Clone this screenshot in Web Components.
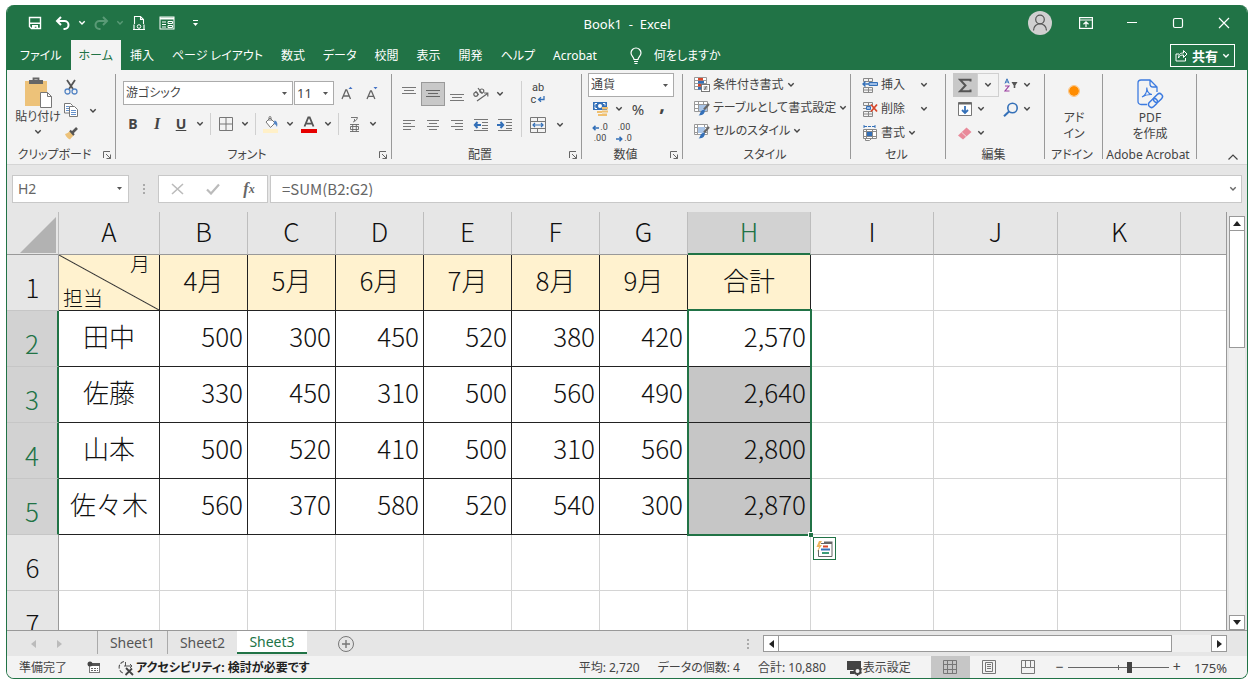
<!DOCTYPE html>
<html lang="ja">
<head>
<meta charset="utf-8">
<title>Book1 - Excel</title>
<style>
  html, body { height: 100%; }
  body {
    margin: 0;
    padding: 5px 6px 6px;
    box-sizing: border-box;
    background: #fff;
    color: #444;
    font-family: "Noto Sans", "Noto Sans CJK JP", sans-serif;
    font-size: 12px;
    line-height: 16px;
    font-feature-settings: "palt";
    --green: #217346;
    --chrome: #e6e6e6;
    --ribbon: #f3f3f3;
  }
</style>
</head>
<body>
<xl-window>
  <xl-titlebar slot="top" book="Book1  -  Excel"></xl-titlebar>
  <xl-tabs slot="top"></xl-tabs>
  <xl-ribbon slot="top"></xl-ribbon>
  <xl-formula slot="top" ref="H2" formula="=SUM(B2:G2)"></xl-formula>
  <xl-sheet></xl-sheet>
  <xl-sheetbar slot="bottom"></xl-sheetbar>
  <xl-status slot="bottom"></xl-status>
</xl-window>

<script>
// Iconos: [ancho, alto, contenido svg]
const ICONS = {
  save: [14, 14, '<path d="M1.5 1.5h11v11h-9l-2-2z" fill="none" stroke="#fff" stroke-width="1.4"/><path d="M2 6.5h10v1.4H2zM4 9h6v4H8.400v-2.200H6.800V13H4z" fill="#fff"/>'],
  undo: [16, 14, '<path d="M6 1 2 5l4 4M2.500 5H9.500a4 4 0 0 1 0 8H8.500" fill="none" stroke="#fff" stroke-width="2"/>'],
  redo: [16, 14, '<path d="M10 1l4 4-4 4M13.500 5H6.500a4 4 0 0 0 0 8H7.500" fill="none" stroke="#5a9a76" stroke-width="2"/>'],
  preview: [14, 16, '<path d="M2.500 9V1.500h6l3 3V9M8.500 1.500v3h3M1 14.500h12" fill="none" stroke="#fff" stroke-width="1.100"/><circle cx="7" cy="11.500" r="1.800" fill="none" stroke="#fff"/><path d="M2 9.500v5M12 9.500v5" stroke="#fff" stroke-width="1.200"/>'],
  form: [16, 14, '<rect x="1" y="1" width="14" height="12" fill="none" stroke="#fff"/><path d="M1 2.500h14" stroke="#fff" stroke-width="2"/><path d="M3 6h4M3 8.500h4M3 11h4" stroke="#fff"/><path d="M9 5.500h4.500v2H9zM9 9.500h4.500v2H9z" fill="none" stroke="#fff"/>'],
  qat: [7, 8, '<path d="M1 1.500h5" stroke="#fff"/><path d="M1 4h5L3.500 7z" fill="#fff"/>'],
  chev: [8, 6, '<path d="M1.300 1.300 4 4 6.700 1.300" fill="none" stroke="currentColor" stroke-width="1.400"/>'],
  up: [12, 8, '<path d="M1.500 6.500 6 2l4.500 4.500" fill="none" stroke="#444" stroke-width="1.200"/>'],
  caret: [5, 3, '<path d="M0 0h5L2.500 3z" fill="#555"/>'],
  user: [24, 24, '<circle cx="12" cy="12" r="12" fill="#d0d0d0"/><circle cx="12" cy="8.500" r="4.300" fill="none" stroke="#555" stroke-width="1.200"/><path d="M5.500 19.500c0-9 13-9 13 0" fill="none" stroke="#555" stroke-width="1.200"/>'],
  display: [14, 12, '<rect x=".6" y=".6" width="12.800" height="10.800" fill="none" stroke="#fff" stroke-width="1.200"/><path d="M1 3h12M7 10V5M4.500 7.200 7 4.800l2.500 2.400" fill="none" stroke="#fff" stroke-width="1.200"/>'],
  min: [12, 12, '<path d="M1 5.500h10" stroke="#fff"/>'],
  max: [12, 12, '<rect x="1.500" y="1.500" width="9" height="9" rx="1.500" fill="none" stroke="#fff" stroke-width="1.200"/>'],
  close: [12, 12, '<path d="M1 1l10 10M11 1 1 11" stroke="#fff" stroke-width="1.200"/>'],
  bulb: [12, 18, '<path d="M4 12.500c0-2.500-3-3.500-3-6.500a5 5 0 0 1 10 0c0 3-3 4-3 6.500zM4 14.500h4M4.500 16.500h3" fill="none" stroke="#fff" stroke-width="1.200"/>'],
  share: [13, 13, '<path d="M4 5H1v7h9.500V9" fill="none" stroke="#fff"/><path d="M3.500 9c0-4 2-5 5-5V1.500L12 5 8.500 8.500V6C6 6 4.500 6.500 3.500 9z" fill="none" stroke="#fff"/>'],
  paste: [28, 32, '<rect x="1" y="4" width="22" height="25" fill="#edc279"/><rect x="5" y="3" width="14" height="4" fill="#666"/><path d="M9.500 4V1.500h5V4" fill="none" stroke="#666" stroke-width="1.800"/><path d="M16.500 15.500h7l4 4v11h-11z" fill="#fff" stroke="#777"/><path d="M23.500 15.500v4h4" fill="none" stroke="#777"/>'],
  cut: [14, 16, '<path d="M3 1l6 9M11 1 5 10" stroke="#555" stroke-width="1.800"/><circle cx="3.500" cy="12.500" r="2.500" fill="none" stroke="#5585c4" stroke-width="1.300"/><circle cx="10.500" cy="12.500" r="2.500" fill="none" stroke="#5585c4" stroke-width="1.300"/>'],
  copy: [14, 16, '<path d="M.500 1.500h6l2 2V11h-8z" fill="#fff" stroke="#777"/><path d="M5.500 4.500h5l3 3v7h-8z" fill="#fff" stroke="#777"/><path d="M2 4.500h3M2 6.500h3M2 8.500h3M7 8.500h5M7 10.500h5M7 12.500h5" stroke="#5585c4" stroke-width=".9"/>'],
  brush: [14, 14, '<path d="M1 8c2-.5 4-2 5-3l4 4c-2 2-3.500 3.500-4 4.500C4 12.500 2 11 1 8z" fill="#edc279"/><path d="M6 4.500 10 9" stroke="#555" stroke-width="2"/><path d="M8 7l5-5" stroke="#555" stroke-width="2.600"/>'],
  launch: [10, 10, '<path d="M1.500 8V1.500H8M4 4l4.500 4.500M8.500 4.500v4h-4" fill="none" stroke="#666"/>'],
  border: [16, 16, '<path d="M1.500 1.500h13v13h-13zM8 1.500v13M1.500 8h13" fill="none" stroke="#777"/>'],
  bucket: [16, 17, '<path d="M3 6l4-4 5 5-4.500 4.500z" fill="#fff" stroke="#777"/><path d="M6 5V1.500a1 1 0 0 1 2 0V5" fill="none" stroke="#777"/><path d="M11.500 4.500c2.500.5 3.500 3 2.500 6.500-1-2-1.500-3-3.500-3z" fill="#5585c4"/><path d="M0 13h15v4H0z" fill="#fff0c8"/>'],
  fcolor: [16, 17, '<path d="M3.500 10.500 7.300 1.500h1.400l3.800 9M5 7.700h6" fill="none" stroke="#555" stroke-width="1.800"/><path d="M0 13h16v4H0z" fill="#e60000"/>'],
  grow: [12, 15, '<path d="M1 13 4.800 4h.9L9.500 13M2.500 10h5.500" fill="none" stroke="#666" stroke-width="1.300"/><path d="M7.500 3h4L9.500.8z" fill="#4472c4"/>'],
  shrink: [12, 15, '<path d="M1 13 4.500 5h.9L8.900 13M2.500 10.300h5" fill="none" stroke="#666" stroke-width="1.300"/><path d="M7.500 1h4L9.500 3.200z" fill="#4472c4"/>'],
  ruby: [12, 16, '<path d="M3 1.500h6.500C9 4 7 5.500 5 6M6.500 3v2M2 8.500h9M2 15.500h9M4.700 8.500v7M8.300 8.500v7M2.500 10.500v3h8v-3z" fill="none" stroke="#666" stroke-width=".9"/>'],
  orient: [18, 16, '<g fill="none" stroke="#666" stroke-width="1.200"><circle cx="3.800" cy="8.300" r="2"/><path d="M3.600 5.200 6.600 9"/><path d="M6 2.200l4.400 5.400"/><circle cx="9.800" cy="5" r="2"/><path d="M5 15 15.500 7.500M12 7h3.800v3.500"/></g>'],
  atop: [16, 14, '<path d="M1 .500h14M3 3.500h10M1 6.500h14" stroke="#777"/>'],
  amid: [16, 14, '<path d="M1 3.500h14M3 6.500h10M1 9.500h14" stroke="#666"/>'],
  abot: [16, 14, '<path d="M1 7.500h14M3 10.500h10M1 13.500h14" stroke="#777"/>'],
  left: [14, 12, '<path d="M1 1.500h12M1 4.500h8M1 7.500h12M1 10.500h8" stroke="#777"/>'],
  center: [14, 12, '<path d="M1 1.500h12M3 4.500h8M1 7.500h12M3 10.500h8" stroke="#777"/>'],
  right: [14, 12, '<path d="M1 1.500h12M5 4.500h8M1 7.500h12M5 10.500h8" stroke="#777"/>'],
  outdent: [16, 14, '<path d="M1 1.500h14M9 4.500h6M9 7.500h6M9 10.500h6M1 12.500h14" stroke="#777"/><path d="M8 7H2M4.500 4 1.800 7l2.700 3" fill="none" stroke="#3470b8" stroke-width="2"/>'],
  indent: [16, 14, '<path d="M1 1.500h14M9 4.500h6M9 7.500h6M9 10.500h6M1 12.500h14" stroke="#777"/><path d="M0 7h6M3.500 4l2.700 3-2.700 3" fill="none" stroke="#3470b8" stroke-width="2"/>'],
  merge: [16, 16, '<path d="M.5.500h15v15H.500zM.500 4.500h15M.500 11.500h15M7.500.500v4M7.500 11.500v4" fill="none" stroke="#777"/><path d="M3 8h10M5 6 3 8l2 2M11 6l2 2-2 2" fill="none" stroke="#3470b8" stroke-width="1.200"/>'],
  money: [17, 16, '<rect x="1" y="1" width="14" height="8" fill="#3470b8"/><path d="M3 4.500v-2h2M13 4.500v-2h-2M3 5.500v2h2" stroke="#fff" fill="none"/><circle cx="8" cy="5" r="2" fill="#fff"/><path d="M10 6h6v2.500h-6zM5 10h5v2H5zM10 9.500h6v2h-6zM6 13h4v2H6zM10 12.500h5v2.500h-5z" fill="#f0c070"/>'],
  arrL: [7, 6, '<path d="M7 3H1.500M3.500 .8 1.300 3l2.200 2.200" fill="none" stroke="#3470b8" stroke-width="1.600"/>'],
  arrR: [7, 6, '<path d="M0 3h5.500M3.500.8 5.700 3 3.500 5.200" fill="none" stroke="#3470b8" stroke-width="1.600"/>'],
  ret: [8, 7, '<path d="M7 0v3.500H2M4 1.200 1.500 3.500 4 5.800" fill="none" stroke="#3470b8" stroke-width="1.300"/>'],
  cond: [16, 16, '<path d="M.500 .500h12v12H.500zM4.500 .500v12M8.500 .500v12M.500 3.500h12M.500 6.500h12M.500 9.500h12" fill="#fff" stroke="#999"/><path d="M4 1h5v2.500H4zM4 7h3v2.500H4z" fill="#d8472b"/><path d="M4 4h6v2.500H4zM4 10h4v2.500H4z" fill="#3470b8"/><rect x="7.500" y="7.500" width="8" height="7" fill="#fff" stroke="#777"/><path d="M9.500 10h4M9.500 12h4M12.500 9l-2 4" stroke="#555" stroke-width=".8"/>'],
  tstyle: [16, 16, '<path d="M.500 1.500h13v10H.500zM.500 4.500h13M.500 8.500h13M4.500 1.500v10M9.500 1.500v10" fill="#fff" stroke="#999"/><path d="M5 5h8v6H5z" fill="#a9c4e6"/><path d="M15 4 10 9.500" stroke="#666" stroke-width="2.200"/><path d="M10.500 9.500c1 3-1 6-6 6 2-1 1.500-5 4.500-5.500z" fill="#3470b8"/>'],
  cstyle: [16, 16, '<path d="M.500 1.500h13v10H.500zM.500 4.500h13M.500 9.500h13M3.500 1.500v10M10.500 1.500v10" fill="#fff" stroke="#999"/><path d="M4 4h7v6H4z" fill="#a9c4e6"/><path d="M15 4 10 9.500" stroke="#666" stroke-width="2.200"/><path d="M10.500 9.500c1 3-1 6-6 6 2-1 1.500-5 4.500-5.500z" fill="#3470b8"/>'],
  cins: [16, 16, '<path d="M1.500 1.500h9v3h-9zM6.500 1.500v3M1.500 10.500h9v5h-9zM6.500 10.500v5M1.500 13h9" fill="none" stroke="#888"/><path d="M7 5.500h8.500v3H7z" fill="#9dbde6" stroke="#3470b8"/><path d="M7 7H1.500M3.500 4.500 1 7l2.500 2.500" fill="none" stroke="#3470b8" stroke-width="1.400"/>'],
  cdel: [16, 16, '<path d="M1.500 1.500h9v3h-9zM6.500 1.500v3M1.500 10.500h9v5h-9zM6.500 10.500v5M1.500 13h9M1 7.500h4" fill="none" stroke="#888"/><path d="M4.500 5.500h4v3h-4z" fill="#9dbde6" stroke="#3470b8"/><path d="M9 3.500l6 7M15 3.500l-6 7" stroke="#d8472b" stroke-width="1.800"/>'],
  cfmt: [16, 16, '<path d="M2 1.500h11M2 0v3M13 0v3" stroke="#3470b8" stroke-dasharray="3 1"/><path d="M1.500 4.500h13v9h-13zM4.500 4.500v9M10.500 4.500v9M1.500 6.500h13M1.500 11.500h13M3.500 13.500v2h4l2-2" fill="#fff" stroke="#888"/><path d="M5 7h5v4H5z" fill="#3470b8"/>'],
  sum: [14, 15, '<path d="M12.500 3.500V1.700H2L7.500 7.500 2 13.300h10.500v-1.800" fill="none" stroke="#555" stroke-width="2"/>'],
  fill: [14, 14, '<path d="M.500.500h13v13H.500z" fill="#fff" stroke="#777"/><path d="M.500 1.500h13" stroke="#666" stroke-width="2"/><path d="M7 4v7M4 8l3 3 3-3" fill="none" stroke="#3470b8" stroke-width="1.800"/>'],
  eraser: [14, 14, '<path d="M0 9.500 8.500 1.500 13.500 6 5 13.500z" fill="#e98a9a"/><path d="M3.600 6.200 8.500 10.800" stroke="#f3f3f3" stroke-width=".8"/>'],
  sort: [14, 14, '<path d="M1 5.500 3 .800 5 5.500M1.700 4h2.600" fill="none" stroke="#3470b8"/><path d="M1 8h4L1 13h4.500" fill="none" stroke="#9b3fa0" stroke-width="1.100"/><path d="M7.500 4h6l-2.200 3.500V10h-1.600V7.500z" fill="#555"/>'],
  find: [16, 15, '<circle cx="9.500" cy="6" r="4.700" fill="none" stroke="#3470b8" stroke-width="1.600"/><path d="M6 9.500 1 14.300" stroke="#3470b8" stroke-width="2"/>'],
  addin: [16, 16, '<circle cx="8" cy="8" r="5" fill="#ff8c00"/><circle cx="8" cy="8" r="5.500" fill="none" stroke="#ffc37d" stroke-width="1"/>'],
  pdf: [28, 30, '<path d="M11 25.500H5a3 3 0 0 1-3-3V4a3 3 0 0 1 3-3h9l7 7v5M14 1v4a3 3 0 0 0 3 3h4" fill="none" stroke="#3d7be0" stroke-width="1.300"/><path d="M6 18c4-2 5-6 4.800-9.500C11 13 13 15 16 15.500c-4-.2-7 .5-10 2.500z" fill="none" stroke="#3d7be0" stroke-width="1.100"/><g fill="none" stroke="#3d7be0" stroke-width="1.500"><rect x="17" y="16" width="10" height="6" rx="3" transform="rotate(-45 22 19)"/><rect x="12" y="21" width="10" height="6" rx="3" transform="rotate(-45 17 24)"/></g>'],
  dots: [4, 12, '<path d="M1 1h2v2H1zM1 5h2v2H1zM1 9h2v2H1z" fill="#aaa"/>'],
  cancel: [13, 12, '<path d="M1 1l11 10M12 1 1 11" stroke="#bbb" stroke-width="1.600"/>'],
  ok: [14, 12, '<path d="M1 6.500 5 10.500 13 1.500" fill="none" stroke="#bbb" stroke-width="2.200"/>'],
  corner: [36, 36, '<path d="M36 0v36H0z" fill="#b2b2b2"/>'],
  quick: [20, 20, '<path d="M6 4.500h11v13H3.500V11" fill="none" stroke="#666"/><path d="M9 3.500h8.500" stroke="#666" stroke-width="2"/><path d="M8 7.500h5" stroke="#d8472b" stroke-width="2"/><path d="M6 10.500h9" stroke="#3470b8" stroke-width="2"/><path d="M7 14h7" stroke="#3c9c78" stroke-width="2"/><path d="M4 2 1.500 8H4L2 13l5-7H4.500L7 2z" fill="#edb45c"/>'],
  triU: [8, 5, '<path d="M0 5h8L4 0z" fill="#222"/>'],
  triD: [8, 5, '<path d="M0 0h8L4 5z" fill="#222"/>'],
  triL: [5, 8, '<path d="M5 0v8L0 4z" fill="currentColor"/>'],
  triR: [5, 8, '<path d="M0 0v8l5-4z" fill="currentColor"/>'],
  plus: [18, 18, '<circle cx="9" cy="9" r="7.500" fill="none" stroke="#777"/><path d="M9 5v8M5 9h8" stroke="#777" stroke-width="1.400"/>'],
  macro: [14, 13, '<rect x="2.500" y="2.500" width="10" height="9" fill="#fff" stroke="#777"/><path d="M3 3.500h10" stroke="#555" stroke-width="3"/><circle cx="3" cy="3" r="2.500" fill="#444"/><path d="M4 7.500h7M4 9.500h7" stroke="#666" stroke-dasharray="2 1"/>'],
  access: [17, 16, '<path d="M6 1.500a6 6 0 0 0-1 11.500" fill="none" stroke="#555" stroke-width="1.100" stroke-dasharray="4 1.500"/><path d="M6 6h8M12 4l2 2-2 2M7.500 2v4" fill="none" stroke="#555"/><path d="M8 8l7 7M14 8.500 7.500 15" stroke="#444" stroke-width="1.800"/>'],
  monitor: [17, 16, '<path d="M1 1h14v9H1zM4 11h4v3H4z" fill="#444"/><circle cx="11.500" cy="11" r="3" fill="#f3f3f3" stroke="#444" stroke-width="2"/><path d="M11.500 6v10M6.800 8.500l9.400 5M16.200 8.500l-9.400 5" stroke="#444" stroke-width="1.300" stroke-dasharray="2 6"/>'],
  vgrid: [14, 14, '<path d="M.500.500h13v13H.500zM4.500.500v13M9.500.500v13M.500 4.500h13M.500 9.500h13" fill="none" stroke="#777"/>'],
  vpage: [14, 14, '<path d="M.500.500h13v13H.500z" fill="none" stroke="#777"/><path d="M3.500 2.500h7v9h-7zM5 4.500h4M5 6.500h4M5 8.500h4" fill="none" stroke="#777"/>'],
  vbreak: [14, 14, '<path d="M.500.500h13v13H.500zM4.500.500v7h5v-7M.500 7.500h4M9.500 7.500h4" fill="none" stroke="#777"/>']
};

function icon(name) {
  return `<xl-icon name="${name}"></xl-icon>`;
}

// Clase base: abre el shadow root y pinta el contenido
class XlElement extends HTMLElement {
  constructor() {
    super();
    this.attachShadow({ mode: 'open' });
  }

  connectedCallback() {
    this.shadowRoot.innerHTML = `
      <style>
        * { box-sizing: border-box; }
        button, input, select {
          font: inherit;
          font-feature-settings: inherit;
          color: inherit;
          margin: 0;
          padding: 0;
          border: 0;
          background: none;
          border-radius: 0;
        }
        button { display: flex; align-items: center; justify-content: center; white-space: nowrap; }
        ${this.styles()}
      </style>
      ${this.render()}`;
  }

  styles() { return ''; }
  render() { return '<slot></slot>'; }
}

class XlIcon extends XlElement {
  styles() {
    return ':host { display: inline-flex; flex: none; } svg { display: block; }';
  }
  render() {
    const [w, h, body] = ICONS[this.getAttribute('name')];
    return `<svg width="${w}" height="${h}" viewBox="0 0 ${w} ${h}" aria-hidden="true">${body}</svg>`;
  }
}

class XlWindow extends XlElement {
  styles() {
    return `
      :host {
        display: flex;
        flex-direction: column;
        height: 100%;
        box-sizing: border-box;
        border: 1px solid var(--green);
        border-top: 0;
        border-radius: 8px;
        overflow: hidden;
        background: var(--chrome);
      }`;
  }
  render() {
    return '<slot name="top"></slot><slot></slot><slot name="bottom"></slot>';
  }
}

class XlTitlebar extends XlElement {
  styles() {
    return `
      :host {
        display: grid;
        grid-template-columns: 1fr auto 1fr;
        align-items: center;
        height: 35px;
        background: var(--green);
        color: #fff;
      }
      .qat, .win { display: flex; align-items: center; }
      .qat { padding-left: 14px; }
      .qat button { width: 28px; height: 24px; }
      .qat button.chev { width: 10px; }
      .qat button.dim { color: #5a9a76; }
      .title { white-space: pre; font-size: 13px; padding-top: 2px; }
      .win { justify-content: flex-end; }
      .win button { width: 46px; height: 34px; }
    `;
  }
  render() {
    return `
      <div class="qat">
        <button aria-label="上書き保存">${icon('save')}</button>
        <button aria-label="元に戻す">${icon('undo')}</button>
        <button aria-label="元に戻す一覧" class="chev">${icon('chev')}</button>
        <button aria-label="やり直し">${icon('redo')}</button>
        <button aria-label="やり直し一覧" class="chev dim">${icon('chev')}</button>
        <button aria-label="印刷プレビュー">${icon('preview')}</button>
        <button aria-label="フォーム">${icon('form')}</button>
        <button aria-label="カスタマイズ">${icon('qat')}</button>
      </div>
      <div class="title">${this.getAttribute('book')}</div>
      <div class="win">
        <button aria-label="アカウント">${icon('user')}</button>
        <button aria-label="リボンの表示オプション">${icon('display')}</button>
        <button aria-label="最小化">${icon('min')}</button>
        <button aria-label="最大化">${icon('max')}</button>
        <button aria-label="閉じる">${icon('close')}</button>
      </div>`;
  }
}

class XlTabs extends XlElement {
  styles() {
    return `
      :host {
        display: flex;
        align-items: stretch;
        height: 30px;
        padding: 0 12px 0 4px;
        background: var(--green);
        color: #fff;
      }
      button { padding: 1px 9px 0; }
      button:first-child { padding: 1px 7px 0 8px; }
      .on { background: var(--ribbon); color: var(--green); padding: 1px 8px 0; }
      .tell { gap: 12px; padding-left: 24px; }
      .share { margin: 4px 0 3px auto; padding: 0 4px; gap: 4px; border: 1px solid #fff; font-weight: bold; font-size: 13px; }
    `;
  }
  render() {
    const tabs = ['ファイル', 'ホーム', '挿入', 'ページ レイアウト', '数式', 'データ', '校閲', '表示', '開発', 'ヘルプ', 'Acrobat'];
    return tabs.map(t => `<button class="${t === 'ホーム' ? 'on' : ''}">${t}</button>`).join('') + `
      <button class="tell">${icon('bulb')}何をしますか</button>
      <button class="share">${icon('share')}共有${icon('chev')}</button>`;
  }
}

// Grupo de la cinta: contenido por slot y etiqueta abajo
class XlGroup extends XlElement {
  styles() {
    return `
      :host { display: flex; flex-direction: column; flex: none; position: relative; box-sizing: border-box; height: 93px; padding-top: 3px; }
      :host::after { content: ""; position: absolute; right: 0; top: 4px; bottom: 4px; width: 1px; background: #999; }
      .body { flex: 1; min-height: 0; }
      footer { display: flex; align-items: center; height: 16px; padding-right: 4px; white-space: nowrap; }
      footer span { flex: 1; text-align: center; }
    `;
  }
  render() {
    return `
      <div class="body"><slot></slot></div>
      <footer><span>${this.getAttribute('label')}</span>
      ${this.hasAttribute('launch') ? `<button aria-label="${this.getAttribute('label')}の設定">${icon('launch')}</button>` : ''}</footer>`;
  }
}

class XlRibbon extends XlElement {
  styles() {
    return `
      :host { display: flex; background: var(--ribbon); height: 94px; border-bottom: 1px solid #d5d5d5; }
      .row { display: flex; align-items: center; }
      .col { display: flex; flex-direction: column; }
      button { width: 24px; height: 24px; }
      button.c { width: 14px; }
      button.t { width: auto; gap: 3px; height: 23px; }
      button.big { width: auto; height: auto; flex-direction: column; }
      i.sep { width: 1px; margin: 0 3px; background: #d0d0d0; height: 22px; }
      i.tall { height: 56px; margin: 0 4px; }
      b { color: #444; font-size: 14px; }
      .pick { display: flex; align-items: center; height: 24px; border: 1px solid #ababab; background: #fff; position: relative; }
      .pick select { appearance: none; flex: 1; min-width: 0; height: 22px; padding: 0 0 0 2px; }
      .pick xl-icon { position: absolute; right: 5px; pointer-events: none; }
      .clip { width: 109px; } .font { width: 276px; } .align { width: 190px; } .num { width: 101px; }
      .style { width: 168px; } .cell { width: 95px; } .edit { width: 99px; } .add { width: 58px; } .acro { width: 94px; }
      .clip .row { padding: 2px 0 0 9px; align-items: flex-start; }
      .clip .col button { height: 23px; width: 22px; }
      .clip .col + .col { padding-top: 24px; }
      .clip .big { padding-top: 2px; width: 44px; }
      .edit .c { width: 8px; }
      .pad { padding: 8px 0 0 5px; gap: 7px; }
      .on { background: #c8c8c8; border: 1px solid #999; }
      .tiny { font: 9px/11px Roboto, sans-serif; flex-direction: column; }
      .tiny span { display: flex; align-items: center; gap: 1px; }
      .wrap { font-size: 11px; line-height: 12px; }
      .end { flex: 1; display: flex; justify-content: flex-end; align-items: flex-end; padding-right: 8px; }
      .end button { height: 14px; width: 12px; }
    `;
  }
  btn(name, label, cls = '') {
    return `<button class="${cls}" aria-label="${label}">${icon(name)}</button>`;
  }
  menu(label) {
    return this.btn('chev', label + 'の一覧', 'c');
  }
  render() {
    const b = this.btn.bind(this);
    const m = this.menu.bind(this);
    return `
      <xl-group class="clip" label="クリップボード" launch>
        <div class="row">
          <button class="big">${icon('paste')}<span style="margin: 0 0 4px">貼り付け</span>${icon('chev')}</button>
          <div class="col">${b('cut', '切り取り')}${b('copy', 'コピー')}${b('brush', '書式のコピー')}</div>
          <div class="col">${m('コピー')}</div>
        </div>
      </xl-group>
      <xl-group class="font" label="フォント" launch>
        <div class="col pad">
          <div class="row" style="padding-left: 2px; gap: 1px">
            <div class="pick" style="width: 170px"><select aria-label="フォント"><option>游ゴシック</option></select>${icon('caret')}</div>
            <div class="pick" style="width: 40px; font-size: 13px"><select aria-label="サイズ"><option>11</option></select>${icon('caret')}</div>
            ${b('grow', '拡大')}${b('shrink', '縮小')}
          </div>
          <div class="row">
            <button aria-label="太字"><b>B</b></button>
            <button aria-label="斜体"><b style="font-style: italic; font-family: 'Liberation Serif', serif; font-size: 16px">I</b></button>
            <button aria-label="下線"><b style="text-decoration: underline">U</b></button>${m('下線')}
            <i class="sep"></i>${b('border', '罫線')}${m('罫線')}
            <i class="sep"></i>${b('bucket', '塗りつぶし')}${m('塗りつぶし')}${b('fcolor', 'フォントの色')}${m('フォントの色')}
            <i class="sep"></i>${b('ruby', 'ふりがな')}${m('ふりがな')}
          </div>
        </div>
      </xl-group>
      <xl-group class="align" label="配置" launch>
        <div class="row pad" style="gap: 0">
          <div class="col" style="gap: 7px">
            <div class="row">${b('atop', '上揃え')}${b('amid', '上下中央揃え', 'on')}${b('abot', '下揃え')}${b('orient', '方向')}${m('方向')}</div>
            <div class="row">${b('left', '左揃え')}${b('center', '中央揃え')}${b('right', '右揃え')}${b('outdent', 'インデントを減らす')}${b('indent', 'インデントを増やす')}</div>
          </div>
          <i class="sep tall"></i>
          <div class="col" style="gap: 7px">
            <button class="tiny wrap" aria-label="折り返し"><span>ab</span><span>c${icon('ret')}</span></button>
            <div class="row">${b('merge', 'セルを結合')}<i style="width: 3px"></i>${m('セルを結合')}</div>
          </div>
        </div>
      </xl-group>
      <xl-group class="num" label="数値" launch>
        <div class="col" style="padding-left: 6px">
          <div class="pick" style="width: 86px"><select aria-label="表示形式"><option>通貨</option></select>${icon('caret')}</div>
          <div class="row">${b('money', '通貨')}${m('通貨')}<button aria-label="パーセント" style="font-size: 15px">%</button><button aria-label="桁区切り"><b style="font-size: 20px; line-height: 16px; padding-bottom: 10px">,</b></button></div>
          <div class="row">
            <button class="tiny" aria-label="小数点以下を増やす"><span>${icon('arrL')}.0</span><span>.00</span></button>
            <button class="tiny" aria-label="小数点以下を減らす"><span>.00</span><span>${icon('arrR')}.0</span></button>
          </div>
        </div>
      </xl-group>
      <xl-group class="style" label="スタイル">
        <div class="col" style="padding-left: 11px; align-items: flex-start">
          <button class="t">${icon('cond')}条件付き書式${icon('chev')}</button>
          <button class="t">${icon('tstyle')}テーブルとして書式設定${icon('chev')}</button>
          <button class="t">${icon('cstyle')}セルのスタイル${icon('chev')}</button>
        </div>
      </xl-group>
      <xl-group class="cell" label="セル">
        <div class="col" style="padding-left: 11px; align-items: flex-start">
          <div class="row" style="gap: 12px"><button class="t">${icon('cins')}挿入</button>${m('挿入')}</div>
          <div class="row" style="gap: 12px"><button class="t">${icon('cdel')}削除</button>${m('削除')}</div>
          <button class="t">${icon('cfmt')}書式${icon('chev')}</button>
        </div>
      </xl-group>
      <xl-group class="edit" label="編集">
        <div class="row" style="padding-left: 7px; align-items: flex-start">
          <div class="col">
            <div class="row">
              <button aria-label="合計" style="background: #c8c8c8">${icon('sum')}</button>
              <button aria-label="合計の一覧" style="width: 22px; border: 1px solid #d0d0d0">${icon('chev')}</button>
            </div>
            <div class="row">${b('fill', 'フィル')}${m('フィル')}</div>
            <div class="row">${b('eraser', 'クリア')}${m('クリア')}</div>
          </div>
          <div class="col">
            <div class="row">${b('sort', '並べ替えとフィルター')}${m('並べ替え')}</div>
            <div class="row">${b('find', '検索と選択')}${m('検索')}</div>
          </div>
        </div>
      </xl-group>
      <xl-group class="add" label="アドイン">
        <button class="big" style="width: 100%; padding-top: 10px">${icon('addin')}<span style="margin-top: 11px">アド<br>イン</span></button>
      </xl-group>
      <xl-group class="acro" label="Adobe Acrobat">
        <button class="big" style="width: 100%; padding-top: 6px">${icon('pdf')}<span style="margin-top: 1px">PDF<br>を作成</span></button>
      </xl-group>
      <div class="end">${b('up', 'リボンを折りたたむ')}</div>`;
  }
}

class XlFormula extends XlElement {
  styles() {
    return `
      :host { display: flex; align-items: center; height: 47px; padding: 0 5px; background: var(--chrome); font-size: 14px; color: #666; }
      .box { display: flex; align-items: center; height: 28px; background: #fff; border: 1px solid #c8c8c8; }
      .name { width: 117px; }
      .name input { flex: 1; min-width: 0; padding-left: 5px; }
      .name button { width: 18px; }
      .dots { width: 29px; display: flex; justify-content: center; }
      .fn { width: 110px; margin-right: 2px; }
      .fn button { flex: 1; height: 24px; font: italic bold 16px/20px "Liberation Serif", serif; color: #666; }
      .fn small { font-size: 12px; }
      .text { flex: 1; font-size: 15px; }
      .text input { flex: 1; padding-left: 11px; font-family: "Noto Sans CJK JP", sans-serif; font-feature-settings: normal; }
      .text button { width: 16px; }
    `;
  }
  render() {
    return `
      <div class="box name"><input aria-label="名前ボックス" value="${this.getAttribute('ref')}"><button aria-label="名前の一覧">${icon('caret')}</button></div>
      <div class="dots">${icon('dots')}</div>
      <div class="box fn"><button aria-label="キャンセル">${icon('cancel')}</button><button aria-label="入力">${icon('ok')}</button><button aria-label="関数の挿入">f<small>x</small></button></div>
      <div class="box text"><input aria-label="数式バー" value="${this.getAttribute('formula')}"><button aria-label="数式バーの展開">${icon('chev')}</button></div>`;
  }
}

const COLS = 'ABCDEFGHIJK'.split('');
const WIDTHS = [52, 101, 88, 88, 88, 88, 88, 88, 123, 123, 124, 123];
const ROWS = [
  ['', '4月', '5月', '6月', '7月', '8月', '9月', '合計'],
  ['田中', '500', '300', '450', '520', '380', '420', '2,570'],
  ['佐藤', '330', '450', '310', '500', '560', '490', '2,640'],
  ['山本', '500', '520', '410', '500', '310', '560', '2,800'],
  ['佐々木', '560', '370', '580', '520', '540', '300', '2,870'],
  [],
  []
];

class XlSheet extends XlElement {
  styles() {
    return `
      :host {
        display: flex;
        flex: 1;
        min-height: 0;
        color: #111;
        font-family: "Noto Sans CJK JP", sans-serif;
        font-weight: 300;
        font-size: 26px;
        line-height: 36px;
        font-feature-settings: normal;
      }
      .view { flex: 1; min-width: 0; overflow: hidden; background: #fff; border-right: 1px solid #999; }
      table { table-layout: fixed; border-collapse: separate; border-spacing: 0; width: 100%; }
      th { font-weight: 300; padding: 0; background: var(--chrome); }
      thead th { height: 43px; padding-bottom: 4px; border-bottom: 1px solid #999; border-right: 1px solid #bdbdbd; }
      thead th:first-child { padding: 0; }
      thead th:last-child { border-right: 0; }
      thead xl-icon { margin: 4px 2px 0 0; float: right; }
      tbody th { border-right: 1px solid #999; border-bottom: 1px solid #c6c6c6; padding-top: 8px; }
      tbody tr { height: 56px; }
      th.on { background: #d2d2d2; color: var(--green); }
      thead th.on { box-shadow: inset 0 -1px var(--green); border-bottom-color: var(--green); }
      tbody th.on { border-right: 2px solid var(--green); }
      td { padding: 0 4px 6px 0; border-right: 1px solid #d4d4d4; border-bottom: 1px solid #d4d4d4; text-align: right; white-space: nowrap; }
      td:last-child { border-right: 0; }
      td.data { border-color: #222; }
      td.mid { text-align: center; padding: 0 0 6px; }
      td.head { background: #fff2cf; }
      td.grey { background: #c6c6c6; }
      td.diag { padding: 0; background: #fff2cf linear-gradient(to top right, transparent calc(50% - 1px), #333 50%, transparent calc(50% + 1px)); font-size: 20px; line-height: 18px; }
      .diag div { height: 55px; display: flex; flex-direction: column; justify-content: space-between; padding-bottom: 3px; }
      .diag span { text-align: right; padding-right: 9px; }
      .diag span + span { text-align: left; padding: 0 0 0 4px; }
      td.sel { position: relative; }
      .range { position: absolute; z-index: 1; left: -1px; right: -2px; top: -2px; height: calc(400% + 7px); border: 2px solid var(--green); pointer-events: none; }
      .range i { position: absolute; right: -3px; bottom: -3px; width: 5px; height: 5px; background: var(--green); border: 1px solid #fff; border-width: 1px 0 0 1px; }
      .range button { position: absolute; left: calc(100% + 3px); top: calc(100% + 3px); width: 23px; height: 23px; background: #fff; border: 1px solid var(--green); }
      .scroll { width: 20px; padding: 4px 2px 0; display: flex; flex-direction: column; }
      .scroll button { height: 15px; background: #fff; border: 1px solid #999; }
      .track { flex: 1; background: #f0f0f0; }
      .thumb { height: 117px; background: #fff; border: 1px solid #999; border-top: 0; }
    `;
  }
  cell(value, r, c) {
    if (r === 0 && c === 0) {
      return '<td class="data diag"><div><span>月</span><span>担当</span></div></td>';
    }
    if (value === undefined) return '<td></td>';
    const cls = ['data'];
    if (r === 0 || c === 0) cls.push('mid');
    if (r === 0) cls.push('head');
    if (c === 7 && r > 1) cls.push('grey');
    let extra = '';
    if (c === 7 && r === 1) {
      cls.push('sel');
      extra = `<div class="range"><i></i><button aria-label="クイック分析">${icon('quick')}</button></div>`;
    }
    return `<td class="${cls.join(' ')}">${value}${extra}</td>`;
  }
  render() {
    const head = COLS.map(c => `<th scope="col" class="${c === 'H' ? 'on' : ''}">${c}</th>`).join('');
    const body = ROWS.map((row, r) => {
      let tds = '';
      for (let c = 0; c < 12; c++) tds += this.cell(row[c], r, c);
      return `<tr><th scope="row" class="${r > 0 && r < 5 ? 'on' : ''}">${r + 1}</th>${tds}</tr>`;
    }).join('');
    return `
      <div class="view">
        <table>
          <colgroup>${WIDTHS.map(w => `<col style="width: ${w}px">`).join('')}<col></colgroup>
          <thead><tr><th>${icon('corner')}</th>${head}<th></th></tr></thead>
          <tbody>${body}</tbody>
        </table>
      </div>
      <div class="scroll">
        <button aria-label="上へ">${icon('triU')}</button>
        <div class="track"><div class="thumb"></div></div>
        <button aria-label="下へ">${icon('triD')}</button>
      </div>`;
  }
}

class XlSheetbar extends XlElement {
  styles() {
    return `
      :host { display: flex; height: 25px; padding-right: 20px; border-top: 1px solid #999; background: var(--chrome); font-size: 14px; color: #555; }
      .nav { display: flex; width: 90px; padding-left: 13px; color: #bbb; }
      .nav button { width: 26px; }
      .tab { width: 70px; height: 23px; border-left: 1px solid #aaa; }
      .tab.on { background: #fff; color: var(--green); border: 0; border-bottom: 2px solid var(--green); }
      .new { width: 77px; }
      .split { margin-left: auto; margin-right: 13px; display: flex; align-items: center; }
      .scroll { display: flex; width: 38%; margin-top: 4px; height: 17px; background: #f0f0f0; color: #222; }
      .scroll button { width: 16px; background: #fff; border: 1px solid #999; }
      .scroll div { flex: 1; }
      .scroll div i { display: block; width: 91%; height: 100%; background: #fff; border: 1px solid #999; border-left: 0; }
    `;
  }
  render() {
    const tabs = ['Sheet1', 'Sheet2', 'Sheet3'];
    return `
      <div class="nav"><button aria-label="前のシート">${icon('triL')}</button><button aria-label="次のシート">${icon('triR')}</button></div>
      ${tabs.map(t => `<button class="tab ${t === 'Sheet3' ? 'on' : ''}">${t}</button>`).join('')}
      <button class="new" aria-label="新しいシート">${icon('plus')}</button>
      <div class="split">${icon('dots')}</div>
      <div class="scroll"><button aria-label="左へ">${icon('triL')}</button><div><i></i></div><button aria-label="右へ">${icon('triR')}</button></div>`;
  }
}

class XlStatus extends XlElement {
  styles() {
    return `
      :host { display: flex; align-items: center; height: 22px; padding: 0 20px 0 12px; background: var(--ribbon); white-space: nowrap; }
      span, .set, .warn, output { padding-top: 2px; }
      .warn { font-weight: bold; color: #222; gap: 1px; margin-left: 17px; }
      .rec { margin-left: 20px; }
      .sums { display: flex; gap: 18px; margin-left: auto; }
      .set { margin: 0 20px; }
      .view { width: 39px; height: 22px; }
      .on { background: #c6c6c6; }
      .zoom { width: 16px; margin-left: 4px; font-size: 14px; }
      .zoom.in { margin-left: 0; }
      input { appearance: none; width: 101px; height: 16px;
        background: linear-gradient(#666, #666) 50% 50% / 1px 5px no-repeat, linear-gradient(#666, #666) 0 50% / 100% 1px no-repeat; }
      input::-webkit-slider-thumb { appearance: none; width: 5px; height: 11px; background: #444; }
      output { margin-left: 9px; font-size: 13px; }
    `;
  }
  render() {
    return `
      <span>準備完了</span>
      <button class="rec" aria-label="マクロの記録">${icon('macro')}</button>
      <button class="warn">${icon('access')}アクセシビリティ: 検討が必要です</button>
      <div class="sums"><span>平均: 2,720</span><span>データの個数: 4</span><span>合計: 10,880</span></div>
      <button class="set">${icon('monitor')}表示設定</button>
      <button class="view on" aria-label="標準">${icon('vgrid')}</button>
      <button class="view" aria-label="ページ レイアウト">${icon('vpage')}</button>
      <button class="view" aria-label="改ページ プレビュー">${icon('vbreak')}</button>
      <button class="zoom" aria-label="縮小">−</button>
      <input type="range" min="0" max="100" value="62" aria-label="ズーム">
      <button class="zoom in" aria-label="拡大">+</button>
      <output>175%</output>`;
  }
}

customElements.define('xl-icon', XlIcon);
customElements.define('xl-group', XlGroup);
customElements.define('xl-window', XlWindow);
customElements.define('xl-titlebar', XlTitlebar);
customElements.define('xl-tabs', XlTabs);
customElements.define('xl-ribbon', XlRibbon);
customElements.define('xl-formula', XlFormula);
customElements.define('xl-sheet', XlSheet);
customElements.define('xl-sheetbar', XlSheetbar);
customElements.define('xl-status', XlStatus);
</script>
</body>
</html>
